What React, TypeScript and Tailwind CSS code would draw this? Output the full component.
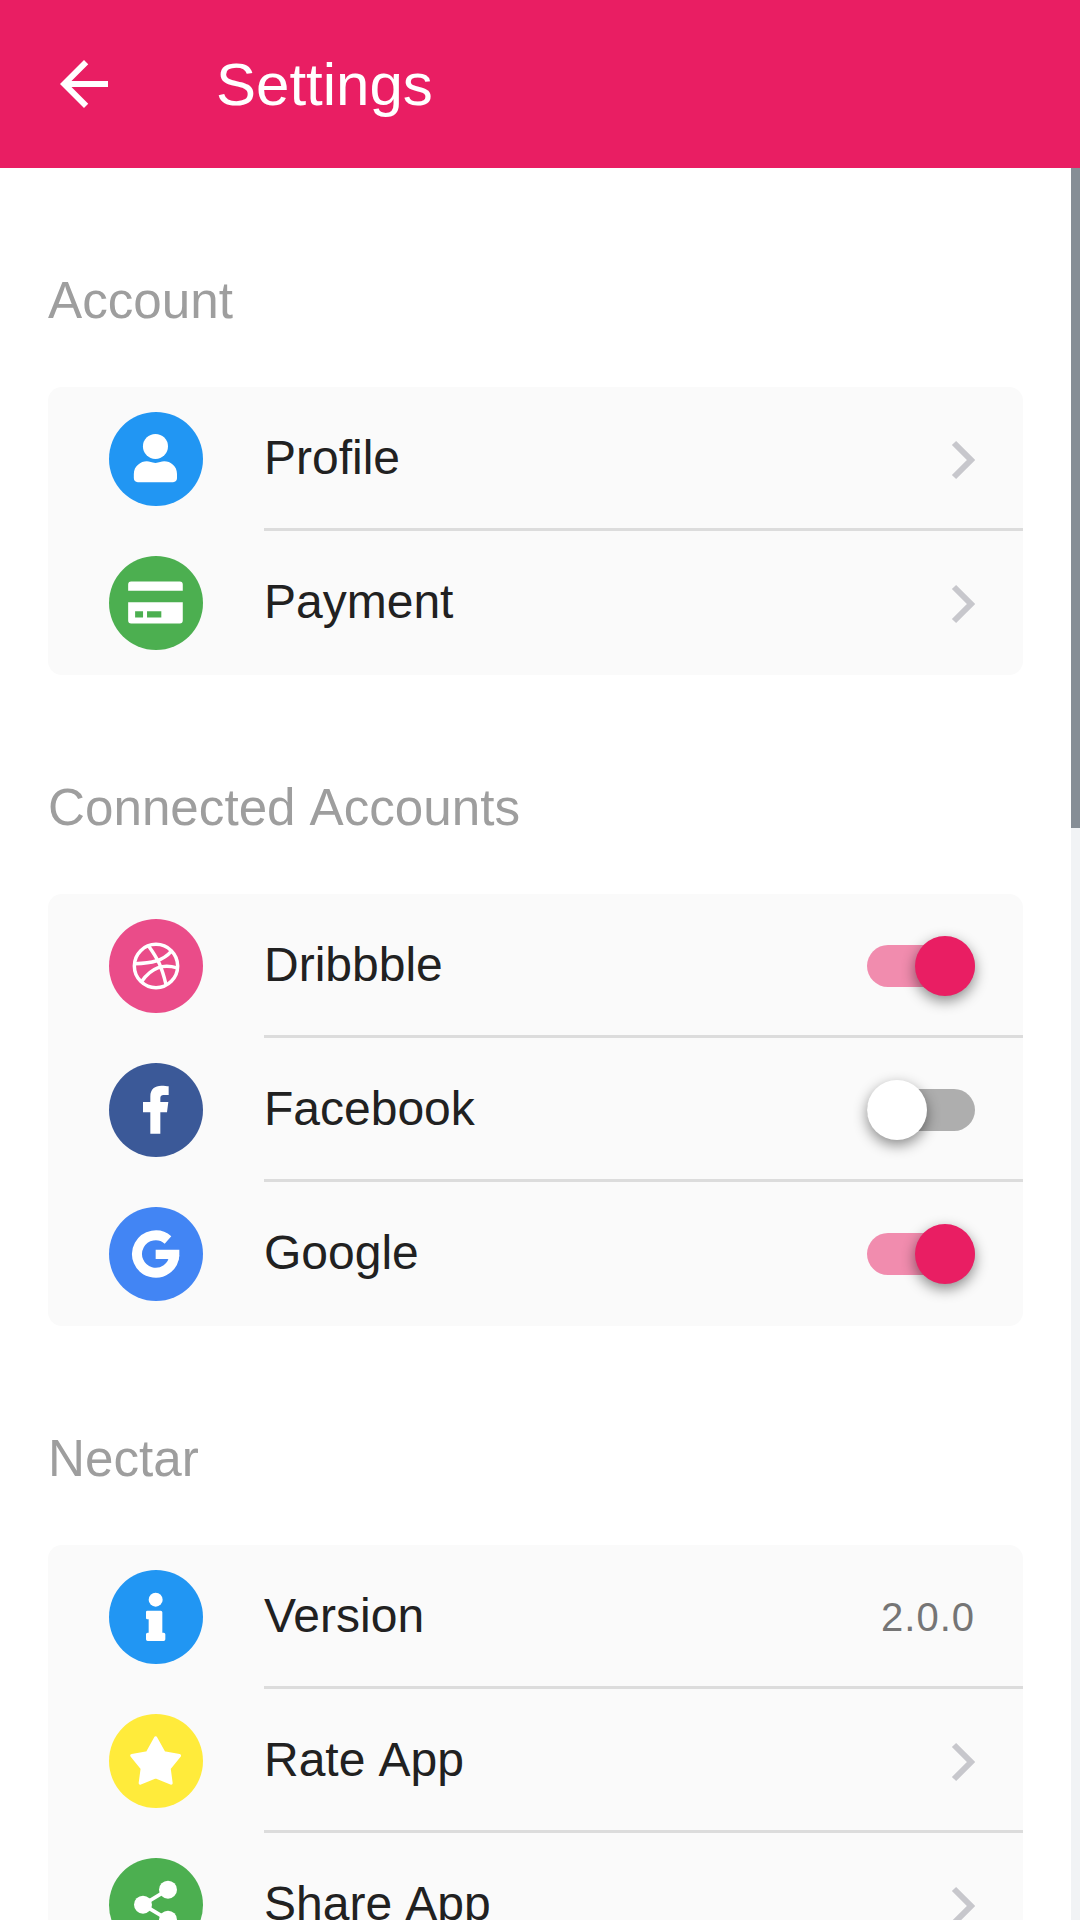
import React from "react";

const PINK = "bg-[#e91e63]";

const BackIcon = () => (
  <svg className="w-[72px] h-[72px] fill-white" viewBox="0 0 24 24">
    <path d="M20 11H7.83l5.59-5.59L12 4l-8 8 8 8 1.41-1.41L7.83 13H20v-2z" />
  </svg>
);

const Chevron = () => (
  <svg className="w-[30px] h-[44px] mt-[2px]" viewBox="0 0 30 44" fill="none">
    <path d="M9 5l17 17-17 17" stroke="#c7c7cc" strokeWidth="6" />
  </svg>
);

const ProfileIcon = () => (
  <svg className="w-full h-full fill-white" viewBox="0 0 94 94">
    <circle cx="46.8" cy="34.7" r="12.6" />
    <path d="M25 66.5v-4C25 54.5 32 49.7 38 49.7c3 0 5 1.6 8.8 1.6s5.800-1.600 8.800-1.600C62 49.700 68.500 54.500 68.500 62.500v4c0 2.500-1.500 4.200-4 4.200H29c-2.500 0-4-1.700-4-4.200z" />
  </svg>
);

const PaymentIcon = () => (
  <svg className="w-full h-full fill-white" viewBox="0 0 94 94">
    <path fillRule="evenodd" d="M22.300 25.700h49a3 3 0 0 1 3 3V35H19.300v-6.300a3 3 0 0 1 3-3zM19.300 46.700h55V65a3 3 0 0 1-3 3h-49a3 3 0 0 1-3-3zM26.300 55.700v6.300h8v-6.300zM38.300 55.700v6.300h14.400v-6.300z" />
  </svg>
);

const DribbbleIcon = () => (
  <svg className="w-[52px] h-[52px]" viewBox="0 0 24 24" fill="none" stroke="#fff" strokeWidth="1.6">
    <circle cx="12" cy="12" r="10" />
    <path d="M8.560 2.750c4.370 6.030 6.020 9.420 8.030 17.720m2.540-15.380c-3.720 4.350-8.940 5.660-16.880 5.850m19.500 1.900c-3.500-.93-6.630-.82-8.940 0-2.580.92-5.010 2.860-7.440 6.320" />
  </svg>
);

const FacebookIcon = () => (
  <svg className="w-full h-full fill-white" viewBox="88 490 280 280">
    <path d="M212 702V638H190V607H212V590C212 568 226 558 245 558C254 558 262 559 267 560V586H252C244 586 242 590 242 597V607H266L262 638H242V702Z" />
  </svg>
);

const GoogleIcon = () => (
  <svg className="w-full h-full" viewBox="88 922 280 280" fill="none">
    <path d="M265 1021A56 56 0 1 0 284 1066" stroke="#fff" strokeWidth="30" />
    <path d="M228 1050H299V1064C299 1070 298 1076 296 1082L262 1078H228Z" fill="#fff" />
  </svg>
);

const InfoIcon = () => (
  <svg className="w-full h-full fill-white" viewBox="88 90 280 280">
    <circle cx="228" cy="179" r="21" />
    <path d="M203 212H243a5 5 0 0 1 5 5V278H252a5 5 0 0 1 5 5V298a5 5 0 0 1-5 5H204a5 5 0 0 1-5-5V283a5 5 0 0 1 5-5H207V238H203a4 4 0 0 1-4-4V216a4 4 0 0 1 4-4Z" />
  </svg>
);

const StarIcon = () => (
  <svg className="w-full h-full fill-white stroke-white" viewBox="88 523 280 280" strokeWidth="10" strokeLinejoin="round">
    <path d="M228 595L253 640L299 648L268 686L274 730L228 711L182 730L188 686L157 648L203 640Z" />
  </svg>
);

const ShareIcon = () => (
  <svg className="w-full h-full fill-white" viewBox="88 955 280 280">
    <circle cx="265" cy="1050" r="27" />
    <circle cx="190" cy="1095" r="27" />
    <circle cx="265" cy="1140" r="27" />
    <path d="M265 1050L190 1095L265 1140" fill="none" stroke="#fff" strokeWidth="11" />
  </svg>
);

const Toggle = ({ on }: { on: boolean }) => (
  <div className={`w-[108px] h-[42px] rounded-full flex items-center ${on ? "bg-[#f18cae] justify-end" : "bg-[#aeaeae] justify-start"}`}>
    <div className={`w-[60px] h-[60px] shrink-0 rounded-full shadow-[0_5px_14px_rgba(0,0,0,0.45)] ${on ? PINK : "bg-white"}`} />
  </div>
);

interface RowProps {
  label: string;
  color: string;
  icon: React.ReactNode;
  right: React.ReactNode;
  last?: boolean;
}

const Row: React.FC<RowProps> = ({ label, color, icon, right, last }) => (
  <div className="h-[144px] flex items-center">
    <div className={`w-[93.33px] h-[93.33px] ml-[61.33px] shrink-0 rounded-full flex items-center justify-center ${color}`}>
      {icon}
    </div>
    <div className={`ml-[61.33px] flex-1 h-full flex items-center justify-between pr-[48px] pt-[3px] border-b-[3px] ${last ? "border-transparent" : "border-[#dcdcdc]"}`}>
      <span className="pb-[2px] text-[48px] leading-[56px] [word-spacing:2.5px] text-[#212121]">{label}</span>
      {right}
    </div>
  </div>
);

const Section = ({ title, children }: { title: string; children: React.ReactNode }) => (
  <section>
    <h2 className="pt-[105px] mb-[58px] text-[51.2px] leading-[56px] [word-spacing:2.5px] font-normal text-[#9e9e9e]">{title}</h2>
    <div className="rounded-[14px] bg-[#fafafa]">{children}</div>
  </section>
);

export default function App() {
  return (
    <div className="w-[1080px] h-[1920px] overflow-hidden bg-white flex flex-col font-['Liberation_Sans',Arial,sans-serif]">
      <header className={`h-[168px] shrink-0 flex items-center pl-[48px] ${PINK}`}>
        <BackIcon />
        <h1 className="ml-[96px] mt-[2px] text-[60px] leading-[64px] font-normal text-white">Settings</h1>
      </header>

      <div className="flex-1 flex min-h-0">
        <main className="w-[1071px] px-[48px]">
          <Section title="Account">
            <Row label="Profile" color="bg-[#2196f3]" icon={<ProfileIcon />} right={<Chevron />} />
            <Row label="Payment" color="bg-[#4caf50]" icon={<PaymentIcon />} right={<Chevron />} last />
          </Section>
          <Section title="Connected Accounts">
            <Row label="Dribbble" color="bg-[#ea4c89]" icon={<DribbbleIcon />} right={<Toggle on />} />
            <Row label="Facebook" color="bg-[#3b5998]" icon={<FacebookIcon />} right={<Toggle on={false} />} />
            <Row label="Google" color="bg-[#4285f4]" icon={<GoogleIcon />} right={<Toggle on />} last />
          </Section>
          <Section title="Nectar">
            <Row
              label="Version"
              color="bg-[#2196f3]"
              icon={<InfoIcon />}
              right={<span className="text-[40px] leading-[56px] tracking-[1px] text-[#757575]">2.0.0</span>}
            />
            <Row label="Rate App" color="bg-[#ffeb3b]" icon={<StarIcon />} right={<Chevron />} />
            <Row label="Share App" color="bg-[#4caf50]" icon={<ShareIcon />} right={<Chevron />} last />
          </Section>
        </main>
        <div className="w-[9px] bg-[#f1f3f5]">
          <div className="h-[660px] bg-[#868e96]" />
        </div>
      </div>
    </div>
  );
}
